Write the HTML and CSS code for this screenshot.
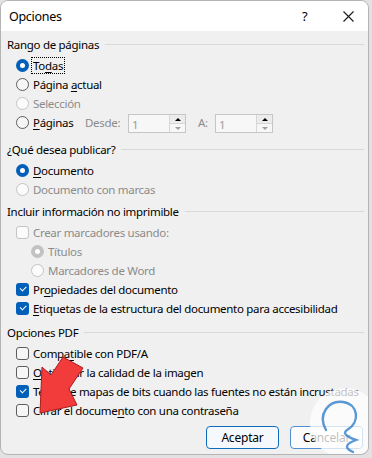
FILE: index.html
```html
<!DOCTYPE html>
<html lang="es">
<head>
    <meta charset="UTF-8">
    <meta name="viewport" content="width=device-width, initial-scale=1.0">
    <title>Opciones</title>
    <link rel="stylesheet" href="styles.css">
</head>
<body>
    <div class="dialog">
        <div class="titlebar">
            <span class="title">Opciones</span>
            <span class="help">?</span>
            <span class="close">
                <svg width="11" height="11" viewBox="0 0 11 11"><path d="M0.5 0.5 L10.5 10.5 M10.5 0.5 L0.5 10.5" stroke="#1a1a1a" stroke-width="1.1"/></svg>
            </span>
        </div>

        <div class="content">
            <div class="group first">
                <div class="group-head"><span>Rango de páginas</span></div>
                <div class="opt"><span class="radio on"></span><span class="label focus">To<u>d</u>as</span></div>
                <div class="opt"><span class="radio"></span><span class="label">Página <u>a</u>ctual</span></div>
                <div class="opt disabled"><span class="radio"></span><span class="label">Selección</span></div>
                <div class="opt">
                    <span class="radio"></span><span class="label pages"><u>P</u>áginas</span>
                    <span class="spin-label">Desde:</span>
                    <span class="spin"><span class="spin-value">1</span><span class="spin-btns"><span class="up"></span><span class="down"></span></span></span>
                    <span class="spin-label short">A:</span>
                    <span class="spin"><span class="spin-value">1</span><span class="spin-btns"><span class="up"></span><span class="down"></span></span></span>
                </div>
            </div>

            <div class="group second">
                <div class="group-head"><span>¿Qué desea publicar?</span></div>
                <div class="opt"><span class="radio on"></span><span class="label"><u>D</u>ocumento</span></div>
                <div class="opt disabled"><span class="radio"></span><span class="label">Documento con marcas</span></div>
            </div>

            <div class="group third">
                <div class="group-head"><span>Incluir información no imprimible</span></div>
                <div class="opt disabled"><span class="check"></span><span class="label">Crear marcadores usando:</span></div>
                <div class="opt sub disabled"><span class="radio on"></span><span class="label">Títulos</span></div>
                <div class="opt sub disabled"><span class="radio"></span><span class="label">Marcadores de Word</span></div>
                <div class="opt"><span class="check on"></span><span class="label">Pr<u>o</u>piedades del documento</span></div>
                <div class="opt"><span class="check on"></span><span class="label"><u>E</u>tiquetas de la estructura del documento para accesibilidad</span></div>
            </div>

            <div class="group fourth">
                <div class="group-head"><span>Opciones PDF</span></div>
                <div class="opt"><span class="check"></span><span class="label">Compa<u>t</u>ible con PDF/A</span></div>
                <div class="opt"><span class="check"></span><span class="label"><u>O</u>ptimizar la calidad de la imagen</span></div>
                <div class="opt"><span class="check on"></span><span class="label">Te<u>x</u>to de mapas de bits cuando las fuentes no están incrustadas</span></div>
                <div class="opt"><span class="check"></span><span class="label">Cifrar el docume<u>n</u>to con una contraseña</span></div>
            </div>

            <div class="buttons">
                <button class="btn default">Aceptar</button>
                <button class="btn">Cancelar</button>
            </div>
        </div>

        <svg class="overlay" width="372" height="458" viewBox="0 0 372 458">
            <circle cx="345" cy="423" r="35" fill="#ffffff" fill-opacity="0.75"/>
            <path d="M326 430 C317 414 329 400 343 402 C358 404 361 422 347 430 C341 434 350 438 356 440 C348 443 342 447 353 452" fill="none" stroke="#3d86cc" stroke-width="2.4" stroke-linecap="round" stroke-opacity="0.85"/>
            <polygon points="40,413 42,367 51,375 63,357 83,368 69,389 77,405" fill="#f23b3b" stroke="#a81c1c" stroke-width="1" stroke-linejoin="round"/>
        </svg>
    </div>
</body>
</html>
```

FILE: styles.css
```css
html {
    background-color: #e2e2e2;
}

body {
    margin: 0;
    font-family: "Noto Sans", "Open Sans", sans-serif;
    font-size: 11.5px;
    letter-spacing: -0.3px;
    color: #000;
}

.dialog {
    position: relative;
    width: 369px;
    height: 455px;
    box-sizing: border-box;
    border: 1px solid #b4b4b4;
    border-radius: 8px;
    background-color: #f0f0f0;
    overflow: hidden;
}

.titlebar {
    height: 30px;
    background-color: #ffffff;
    display: flex;
    align-items: center;
    padding-left: 8px;
}

.title {
    font-size: 12.5px;
    flex: 1;
}

.help {
    font-size: 13px;
    width: 10px;
    margin-right: 31px;
}

.close {
    display: flex;
    margin-right: 14px;
}

.content {
    padding: 4px 4px 0 6px;
}

.group-head {
    height: 18px;
    display: flex;
    align-items: center;
    gap: 6px;
    margin-bottom: 3px;
    white-space: nowrap;
}

.group-head::after {
    content: "";
    flex: 1;
    height: 1px;
    background-color: #d9d9d9;
}

.second { margin-top: 8px; }
.third { margin-top: 3px; }
.fourth { margin-top: 5px; }

.opt {
    height: 19px;
    display: flex;
    align-items: center;
    gap: 4px;
    padding-left: 9px;
    white-space: nowrap;
}

.opt.sub {
    padding-left: 24px;
}

.disabled {
    color: #8b8b8b;
}

u {
    text-underline-offset: 2px;
}

.label.focus {
    outline: 1px dotted #000;
    outline-offset: 0;
    padding: 0 1px;
    margin-left: -1px;
}

.radio {
    width: 13px;
    height: 13px;
    flex-shrink: 0;
    box-sizing: border-box;
    border-radius: 50%;
    border: 1px solid #5e5e5e;
    background-color: #f6f6f6;
    display: flex;
    align-items: center;
    justify-content: center;
}

.radio.on {
    border: none;
    background-color: #005fb8;
}

.radio.on::after {
    content: "";
    width: 5px;
    height: 5px;
    border-radius: 50%;
    background-color: #fff;
}

.disabled .radio {
    border-color: #c4c4c4;
    background-color: #fbfbfb;
}

.disabled .radio.on {
    background-color: #c2c2c2;
    border: none;
}

.check {
    width: 13px;
    height: 13px;
    flex-shrink: 0;
    box-sizing: border-box;
    border-radius: 3px;
    border: 1px solid #5e5e5e;
    background-color: #f6f6f6;
    position: relative;
}

.check.on {
    border: none;
    background-color: #005fb8;
}

.check.on::after {
    content: "";
    position: absolute;
    left: 4px;
    top: 3px;
    width: 5px;
    height: 2.5px;
    border-left: 1px solid #fff;
    border-bottom: 1px solid #fff;
    transform: rotate(-45deg);
}

.disabled .check {
    border-color: #c4c4c4;
    background-color: #fbfbfb;
}

.pages {
    width: 48px;
}

.spin-label {
    color: #8b8b8b;
    width: 39px;
}

.spin-label.short {
    width: 13px;
    margin-left: 8px;
}

.spin {
    width: 58px;
    height: 19px;
    margin-top: 2px;
    box-sizing: border-box;
    border: 1px solid #c6c6c6;
    background-color: #f7f7f7;
    display: flex;
}

.spin-value {
    flex: 1;
    color: #9a9a9a;
    padding: 3px 0 0 3px;
    line-height: 14px;
}

.spin-btns {
    width: 15px;
    border-left: 1px solid #d6d6d6;
    display: flex;
    flex-direction: column;
}

.spin-btns span {
    flex: 1;
    display: flex;
    align-items: center;
    justify-content: center;
}

.spin-btns .up {
    background-color: #ececec;
    border-bottom: 1px solid #d6d6d6;
}

.spin-btns .up::after {
    content: "";
    border-left: 3px solid transparent;
    border-right: 3px solid transparent;
    border-bottom: 3px solid #000;
}

.spin-btns .down::after {
    content: "";
    border-left: 3px solid transparent;
    border-right: 3px solid transparent;
    border-top: 3px solid #a0a0a0;
}

.buttons {
    display: flex;
    justify-content: flex-end;
    gap: 11px;
    margin-top: 6px;
    padding-right: 1px;
}

.btn {
    width: 73px;
    height: 23px;
    font-family: inherit;
    font-size: 12px;
    letter-spacing: -0.2px;
    color: #000;
    background-color: #fbfbfb;
    border: 1px solid #4f8fcf;
    border-radius: 4px;
    padding: 0;
}

.btn.default {
    border-color: #0f6cbd;
    background-color: #f5f9fd;
}

.overlay {
    position: absolute;
    left: -1px;
    top: -1px;
    pointer-events: none;
}
```
